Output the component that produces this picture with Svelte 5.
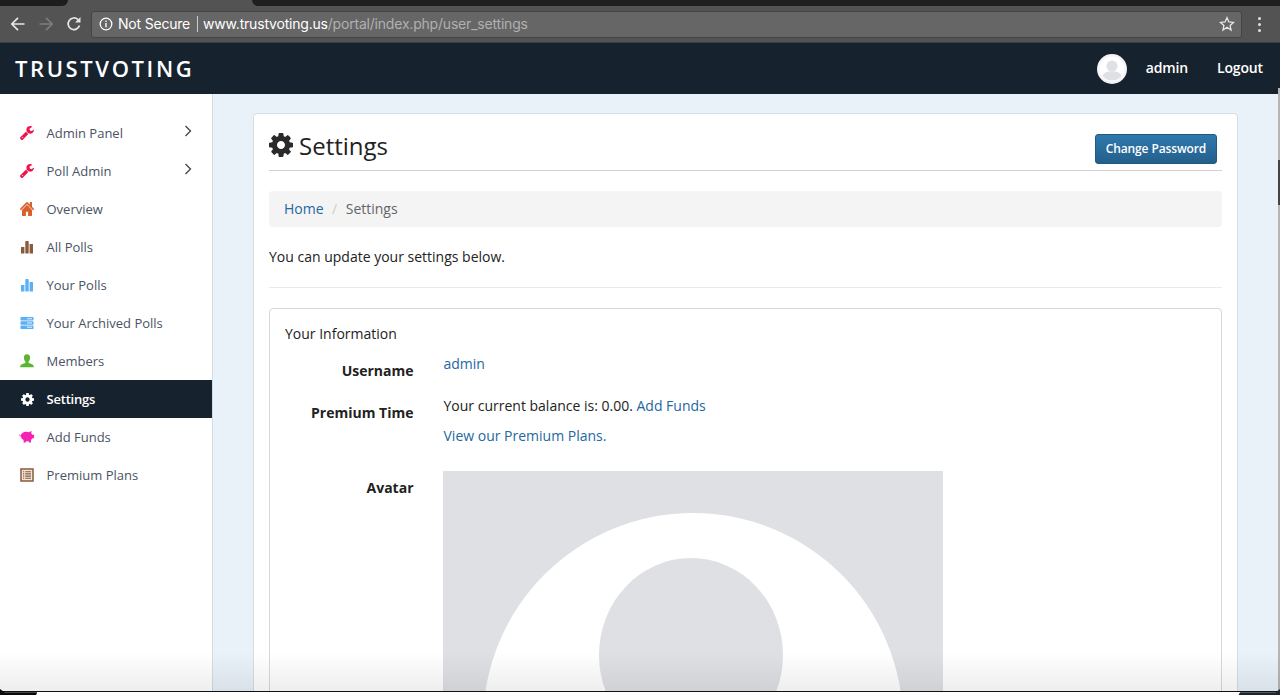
<script>
  const gear = "M1024 768q0-106-75-181t-181-75-181 75-75 181 75 181 181 75 181-75 75-181zm512-109v222q0 12-8 23t-20 13l-185 28q-19 54-39 91 35 50 107 138 10 12 10 25t-9 23q-27 37-99 108t-94 71q-12 0-26-9l-138-108q-44 23-91 38-16 136-29 186-7 28-36 28h-222q-14 0-24.5-8.5t-11.5-21.5l-28-184q-49-16-90-37l-141 107q-10 9-25 9-14 0-25-11-126-114-165-168-7-10-7-23 0-12 8-23 15-21 51-66.5t54-70.5q-27-50-41-99l-183-27q-13-2-21-12.5t-8-23.5v-222q0-12 8-23t19-13l186-28q14-46 39-92-40-57-107-138-10-12-10-24 0-10 9-23 26-36 98.5-107.5t94.5-71.5q13 0 26 10l138 107q44-23 91-38 16-136 29-186 7-28 36-28h222q14 0 24.5 8.5t11.5 21.5l28 184q49 16 90 37l142-107q9-9 24-9 13 0 25 10 129 119 165 170 7 8 7 22 0 12-8 23-15 21-51 66.5t-54 70.5q26 50 41 98l183 28q13 2 21 12.5t8 23.5z";
  const nav = [
    { label: "Admin Panel", icon: "wrench", color: "#f0134d", arrow: true },
    { label: "Poll Admin", icon: "wrench", color: "#f0134d", arrow: true },
    { label: "Overview", icon: "home", color: "#d9602b" },
    { label: "All Polls", icon: "bars", color: "#8a5a3a" },
    { label: "Your Polls", icon: "bars", color: "#5ab0f5" },
    { label: "Your Archived Polls", icon: "server", color: "#5ab0f5" },
    { label: "Members", icon: "user", color: "#5cb531" },
    { label: "Settings", icon: "gear", color: "#ffffff", active: true },
    { label: "Add Funds", icon: "piggy", color: "#f522b4" },
    { label: "Premium Plans", icon: "list", color: "#8a5a3a" }
  ];
</script>

{#snippet icon(name, color)}
  {#if name === "wrench"}
    <svg class="ic" viewBox="0 64 1641 1643" fill={color}><path d="M363 1408q0-26-19-45t-45-19-45 19-19 45 19 45 45 19 45-19 19-45zm644-420l-682 682q-37 37-90 37-52 0-91-37l-106-108q-38-36-38-90 0-53 38-91l681-681q39 98 114.5 173.5t173.5 114.5zm634-435q0 39-23 106-47 134-164.5 217.5t-258.5 83.5q-185 0-316.5-131.5t-131.5-316.5 131.5-316.5 316.5-131.5q58 0 121.5 16.5t107.5 46.5q16 11 16 28t-16 28l-293 169v224l193 107q5-3 79-48.5t135.5-81 70.5-35.5q15 0 23.5 10t8.5 25z"/></svg>
  {:else if name === "home"}
    <svg class="ic" viewBox="26 250 1612 1290" preserveAspectRatio="none" fill={color}><path d="M1408 992v480q0 26-19 45t-45 19h-384v-384h-256v384h-384q-26 0-45-19t-19-45v-480q0-1 .5-3t.5-3l575-474 575 474q1 2 1 6zm223-69l-62 74q-8 9-21 11h-3q-13 0-21-7l-692-577-692 577q-12 8-24 7-13-2-21-11l-62-74q-8-10-7-23.5t11-21.5l719-599q32-26 76-26t76 26l244 204v-195q0-14 9-23t23-9h192q14 0 23 9t9 23v408l219 182q10 8 11 21.5t-7 23.5z"/></svg>
  {:else if name === "bars"}
    <svg class="ic" viewBox="0 0 14 14" fill={color}><rect x="1" y="7" width="3.4" height="6.5"/><rect x="5.3" y="1" width="3.4" height="12.5" rx=".8"/><rect x="9.6" y="4" width="3.4" height="9.5"/></svg>
  {:else if name === "server"}
    <svg class="ic" viewBox="0 0 14 14"><rect x="0.5" y="1" width="13" height="3.4" rx=".6" fill={color}/><rect x="0.5" y="5.3" width="13" height="3.4" rx=".6" fill={color}/><rect x="0.5" y="9.6" width="13" height="3.4" rx=".6" fill={color}/><rect x="7" y="6.3" width="5" height="1.2" fill="#cfe6fb"/><rect x="7" y="2.1" width="5" height="1.2" fill="#cfe6fb"/><rect x="7" y="10.6" width="5" height="1.2" fill="#cfe6fb"/></svg>
  {:else if name === "user"}
    <svg class="ic" viewBox="0 0 14 14" fill={color}><path d="M7 .3c2.100 0 3.100 1.500 3.100 3.500 0 1.700-.8 3.100-1.500 3.800v1.500c2 .8 4.900 1.300 5.200 3.400v.8H.2v-.8c.3-2.100 3.200-2.600 5.200-3.400V7.600C4.700 6.900 3.900 5.500 3.900 3.800 3.900 1.800 4.900.3 7 .3z"/></svg>
  {:else if name === "gear"}
    <svg class="ic gear" viewBox="0 0 1536 1536" fill={color}><path d={gear}/></svg>
  {:else if name === "piggy"}
    <svg class="ic pig" viewBox="0 0 16 14" fill={color}><path d="M.3 4.300c.5 1 1 1.200 1.500 1.100C2.300 3.200 4.600 1.800 7.300 1.800c1 0 1.900.2 2.700.5.700-.7 1.700-1.100 2.700-1l-.5 2c.5.400.9.900 1.200 1.500H15v3.400h-1.500c-.4.700-.9 1.200-1.500 1.600V12.500H9.800v-1.300c-.8.200-2 .2-3 0v1.300H4.600V10.100C3 9.200 2 7.800 1.900 6.300 1 6.400.1 5.700 0 4.500z"/></svg>
  {:else if name === "list"}
    <svg class="ic" viewBox="0 0 14 14"><rect x="1" y="1" width="12" height="12" fill="#efe6de" stroke={color} stroke-width="1.500"/><path d="M3 3.700h1.200M5.200 3.700H11M3 5.900h1.200M5.200 5.900H11M3 8.100h1.200M5.200 8.100H11M3 10.300h1.200M5.200 10.300H11" stroke={color} stroke-width="1.100"/></svg>
  {/if}
{/snippet}

<div class="page">
  <div class="browser">
    <div class="tabstrip"><div class="tab-left"></div><div class="tab-active"></div><div class="tab-right"></div></div>
    <div class="toolbar">
      <svg class="tb back" viewBox="0 0 16 16" fill="none" stroke="#e6e6e6" stroke-width="1.700"><path d="M14.500 8H2M8 1.800 1.800 8 8 14.200"/></svg>
      <svg class="tb fwd" viewBox="0 0 16 16" fill="none" stroke="#7d7d7d" stroke-width="1.700"><path d="M1.500 8H14M8 1.800 14.200 8 8 14.200"/></svg>
      <svg class="tb reload" viewBox="0 0 16 16" fill="none" stroke="#e6e6e6" stroke-width="1.700"><path d="M13.500 9.500A5.800 5.800 0 1 1 12 3.600"/><path d="M14.500 1v5.500H9z" fill="#e6e6e6" stroke="none"/></svg>
      <div class="omni">
        <svg class="info" viewBox="0 0 14 14"><circle cx="7" cy="7" r="5.800" fill="none" stroke="#fff" stroke-width="1.300"/><rect x="6.300" y="6" width="1.400" height="4.300" fill="#fff"/><rect x="6.300" y="3.600" width="1.400" height="1.400" fill="#fff"/></svg>
        <span class="secure">Not Secure</span>
        <span class="sep"></span>
        <span class="url">www.trustvoting.us<span class="dim">/portal/index.php/user_settings</span></span>
        <svg class="star" viewBox="0 0 16 16" fill="none" stroke="#e8e8e8" stroke-width="1.300"><path d="M8 1.700l1.900 4.200 4.600.5-3.400 3.100.9 4.500L8 11.200l-4 2.800.9-4.500L1.500 6.400l4.600-.5z"/></svg>
      </div>
      <div class="dots"><i></i><i></i><i></i></div>
    </div>
  </div>

  <header class="topbar">
    <div class="brand">TRUSTVOTING</div>
    <div class="topright">
      <svg class="avatar-sm" viewBox="0 0 30 30"><circle cx="15" cy="15" r="15" fill="#f4f4f5"/><circle cx="15" cy="15" r="12.500" fill="#fff"/><circle cx="15" cy="12" r="5.500" fill="#dfe0e4"/><path d="M5.500 22c1-3 4-4.500 6-4.500h7c2 0 5 1.500 6 4.500-2.300 3-5.700 4.500-9.500 4.500S7.800 25 5.500 22z" fill="#dfe0e4"/></svg>
      <a class="toplink user" href="#u">admin</a>
      <a class="toplink" href="#l">Logout</a>
    </div>
  </header>

  <div class="body">
    <aside class="sidebar">
      <ul>
        {#each nav as item}
          <li class:active={item.active}>
            <span class="icbox">{@render icon(item.icon, item.color)}</span>
            <span class="lbl">{item.label}</span>
            {#if item.arrow}
              <svg class="chev" viewBox="0 0 8 12" fill="none" stroke="#444" stroke-width="1.300"><path d="M1.500 1l5 5-5 5"/></svg>
            {/if}
          </li>
        {/each}
      </ul>
    </aside>

    <main class="main">
      <section class="card">
        <div class="head">
          <h1><svg class="h-gear" viewBox="0 0 1536 1536" fill="#2a2a2a"><path d={gear}/></svg>Settings</h1>
          <button class="btn">Change Password</button>
        </div>
        <div class="crumbs"><a href="#h">Home</a><span class="slash">/</span><span class="cur">Settings</span></div>
        <p class="intro">You can update your settings below.</p>
        <hr />
        <div class="panel">
          <div class="ptitle">Your Information</div>
          <div class="row">
            <div class="rl">Username</div>
            <div class="rv"><a href="#a">admin</a></div>
          </div>
          <div class="row">
            <div class="rl">Premium Time</div>
            <div class="rv">
              <p>Your current balance is: 0.00. <a href="#f">Add Funds</a></p>
              <p class="last"><a href="#p">View our Premium Plans</a><a href="#p">.</a></p>
            </div>
          </div>
          <div class="row">
            <div class="rl">Avatar</div>
            <div class="rv">
              <svg class="avatar" viewBox="0 0 500 500">
                <rect width="500" height="500" fill="#dfe0e4"/>
                <circle cx="250" cy="252" r="210" fill="#fff"/>
                <ellipse cx="248" cy="184" rx="92" ry="97" fill="#dfe0e4"/>
              </svg>
            </div>
          </div>
        </div>
      </section>
    </main>
  </div>

  <div class="edge"></div>
  <div class="shade"></div>
  <div class="under"><div class="corner-l"></div><div class="corner-r"></div></div>
</div>

<style>
  :global(html), :global(body) { margin: 0; height: 695px; overflow: hidden; }
  .page { position: relative; width: 1280px; height: 695px; overflow: hidden; font-family: "Open Sans", "Noto Sans", sans-serif; font-size: 14px; line-height: 20px; color: #222; background: #e9f1f9; }

  .browser { height: 43px; background: #535353; }
  .tabstrip { display: flex; height: 6px; }
  .tab-left { width: 68px; background: #1d1d1f; border-bottom-right-radius: 6px; }
  .tab-active { width: 184px; background: #535353; }
  .tab-right { flex: 1; background: #1f1f21; border-bottom-left-radius: 6px; }
  .toolbar { display: flex; align-items: center; height: 36px; border-bottom: 1px solid #3d3d3d; padding-left: 10px; }
  .tb { width: 16px; height: 16px; flex: none; }
  .back { margin-right: 12px; }
  .fwd { margin-right: 12px; }
  .reload { margin-right: 9px; }
  .omni { flex: none; width: 1149px; height: 25px; background: #666; border: 1px solid #444; border-radius: 3px; display: flex; align-items: center; font-family: Inter, Roboto, sans-serif; font-size: 14px; color: #fff; }
  .info { width: 14px; height: 14px; margin: 0 5px 0 7px; flex: none; }
  .secure { white-space: nowrap; letter-spacing: -0.2px; }
  .sep { width: 1px; height: 16px; background: #ccc; margin: 0 5px 0 7px; flex: none; }
  .url { flex: 1; white-space: nowrap; letter-spacing: -0.2px; color: #fff; }
  .dim { color: #b0b0b0; }
  .star { width: 16px; height: 16px; margin-right: 6px; flex: none; }
  .dots { display: flex; flex-direction: column; gap: 3px; margin-left: 16px; }
  .dots i { width: 3px; height: 3px; background: #e0e0e0; border-radius: 50%; display: block; }

  .topbar { height: 51px; background: #17222f; display: flex; align-items: center; justify-content: space-between; padding: 0 17px 0 15px; }
  .brand { color: #fff; font-size: 22px; font-weight: 600; letter-spacing: 2.600px; line-height: 1; margin-top: -2px; }
  .topright { display: flex; align-items: center; }
  .avatar-sm { width: 30px; height: 30px; margin-right: 19px; }
  .toplink { color: #fff; font-weight: 600; text-decoration: none; font-size: 14px; letter-spacing: -0.15px; margin-top: -2px; }
  .user { margin-right: 29px; }

  .body { display: flex; height: 601px; }
  .sidebar { width: 212px; flex: none; background: #fff; border-right: 1px solid #d3dce6; padding-top: 20px; }
  ul { list-style: none; margin: 0; padding: 0; }
  li { height: 38px; display: flex; align-items: center; padding-left: 20px; color: #4a5362; font-size: 13px; position: relative; }
  li.active { background: #17222f; color: #fff; font-weight: 600; letter-spacing: -0.2px; }
  .icbox { width: 14px; height: 14px; display: flex; align-items: center; justify-content: center; margin-right: 12.500px; flex: none; }
  .ic { width: 14px; height: 14px; display: block; flex: none; }
  .gear { width: 13px; height: 13px; }
  .pig { width: 16px; height: 14px; }
  .lbl { flex: 1; }
  .chev { width: 8px; height: 12px; position: absolute; left: 184px; top: 11px; }

  .main { flex: 1; padding: 19px 42px 0 40px; min-width: 0; }
  .card { background: #fff; border: 1px solid #d5dde5; border-radius: 4px; padding: 15px; height: 900px; }
  .head { display: flex; justify-content: space-between; align-items: flex-start; height: 41px; border-bottom: 1px solid #d2d2d4; padding-right: 5px; }
  h1 { margin: 0; display: flex; align-items: center; gap: 6px; font-size: 24px; font-weight: 400; line-height: 34px; color: #222; }
  .h-gear { width: 24px; height: 24px; margin-top: -3px; }
  .btn { margin: 5px 0 0; height: 30px; width: 122px; padding: 0; font: 600 12px/1 "Open Sans", sans-serif; letter-spacing: -0.12px; color: #fff; background: linear-gradient(#2f79ad, #245f8c); border: 1px solid #1f5a85; border-radius: 3px; }
  .crumbs { margin-top: 20px; height: 36px; background: #f4f4f4; border-radius: 4px; display: flex; align-items: center; padding-left: 15px; }
  a { color: #23689f; text-decoration: none; }
  .slash { color: #ccc; margin: 0 8.500px; }
  .cur { color: #666; }
  .intro { margin: 20px 0; }
  hr { border: 0; border-top: 1px solid #eaeaea; margin: 0 0 20px; }
  .panel { border: 1px solid #d8d8da; border-radius: 4px; padding: 15px; }
  .ptitle { margin-bottom: 10px; }
  .row { display: flex; }
  .rl { width: 128.500px; margin-right: 30px; text-align: right; font-weight: 700; padding-top: 7px; flex: none; }
  .rv { flex: 1; padding-bottom: 22px; }
  .rv p { margin: 0 0 10px; }
  .rv p.last { margin-bottom: 3px; }
  .avatar { display: block; width: 500px; height: 500px; margin-left: -0.500px; }

  .edge { position: absolute; right: 0; top: 88px; width: 2px; height: 607px; background: #b5b5b5; }
  .edge::before { content: ""; position: absolute; left: 0; top: 72px; width: 2px; height: 45px; background: #444; }
  .shade { position: absolute; left: 0; right: 0; top: 652px; height: 39px; background: linear-gradient(rgba(0,0,0,0), rgba(0,0,0,0.065)); pointer-events: none; }
  .under { position: absolute; left: 0; right: 0; top: 691px; height: 4px; background: #fff; border-top: 1px solid #111; box-sizing: border-box; }
  .corner-l { position: absolute; left: 0; top: -3px; width: 37px; height: 7px; background: #0a0a0a; border-bottom-right-radius: 4px; clip-path: polygon(0 0, 12% 45%, 100% 45%, 100% 100%, 0 100%); }
  .corner-r { position: absolute; right: 0; top: -3px; width: 42px; height: 7px; background: #1b2530; clip-path: polygon(100% 0, 100% 100%, 0 100%, 5% 45%, 90% 45%); }
</style>
